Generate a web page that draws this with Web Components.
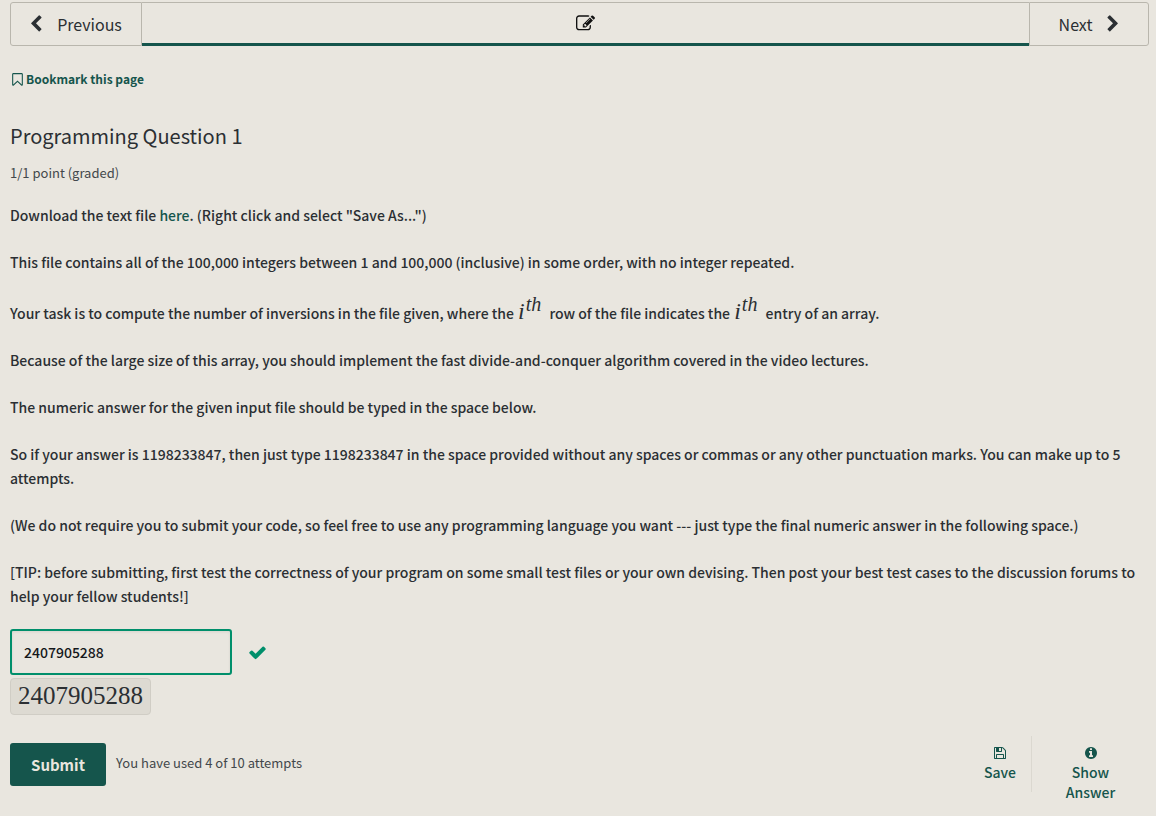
<!DOCTYPE html>
<html lang="en">
<head>
<meta charset="utf-8">
<meta name="viewport" content="width=device-width, initial-scale=1">
<title>Programming Question 1</title>
<style>
  :root {
    --bg: #e9e6df;
    --ink: #2b2f33;
    --muted: #43484b;
    --brand: #15554c;
    --ok: #008f6b;
    --line: #b9b6ad;
    --math: "Liberation Serif", serif;
  }
  body {
    margin: 0;
    background: var(--bg);
    color: var(--ink);
    font: 500 14px/24px "Noto Sans CJK SC", "Noto Sans", sans-serif;
  }
</style>
</head>
<body>
<course-unit></course-unit>

<script>
const ICONS = {
  left: 'M1427 301l-531 531 531 531q19 19 19 45t-19 45l-166 166q-19 19-45 19t-45-19l-742-742q-19-19-19-45t19-45l742-742q19-19 45-19t45 19l166 166q19 19 19 45t-19 45z',
  right: 'M1363 877l-742 742q-19 19-45 19t-45-19l-166-166q-19-19-19-45t19-45l531-531-531-531q-19-19-19-45t19-45l166-166q19-19 45-19t45 19l742 742q19 19 19 45t-19 45z',
  check: 'M1671 566q0 40-28 68l-724 724-136 136q-28 28-68 28t-68-28l-136-136-362-362q-28-28-28-68t28-68l136-136q28-28 68-28t68 28l294 295 656-657q28-28 68-28t68 28l136 136q28 28 28 68z',
  edit: 'M888 1184l116-116-152-152-116 116v56h96v96h56zm440-720q-16-16-33 1l-350 350q-17 17-1 33t33-1l350-350q17-17 1-33zm80 594v190q0 119-84.5 203.5t-203.5 84.5h-832q-119 0-203.5-84.5t-84.5-203.5v-832q0-119 84.5-203.5t203.5-84.5h832q63 0 117 25 15 7 18 23 3 17-9 29l-49 49q-14 14-32 8-23-6-45-6h-832q-66 0-113 47t-47 113v832q0 66 47 113t113 47h832q66 0 113-47t47-113v-126q0-13 9-22l64-64q15-15 35-7t20 29zm-96-738l288 288-672 672h-288v-288zm444 132l-92 92-288-288 92-92q28-28 68-28t68 28l152 152q28 28 28 68t-28 68z',
  save: 'M512 1536h768v-384h-768v384zm896 0h128v-896q0-14-10-38.5t-20-34.5l-281-281q-10-10-34-20t-39-10v416q0 40-28 68t-68 28h-576q-40 0-68-28t-28-68v-416h-128v1280h128v-416q0-40 28-68t68-28h832q40 0 68 28t28 68v416zm-384-928v-320q0-13-9.5-22.5t-22.5-9.5h-192q-13 0-22.5 9.5t-9.5 22.5v320q0 13 9.5 22.5t22.5 9.5h192q13 0 22.5-9.5t9.5-22.5zm640 32v928q0 40-28 68t-68 28h-1344q-40 0-68-28t-28-68v-1344q0-40 28-68t68-28h928q40 0 88 20t76 48l280 280q28 28 48 76t20 88z',
  info: 'M1152 1376v-160q0-14-9-23t-23-9h-96v-512q0-14-9-23t-23-9h-320q-14 0-23 9t-9 23v160q0 14 9 23t23 9h96v320h-96q-14 0-23 9t-9 23v160q0 14 9 23t23 9h448q14 0 23-9t9-23zm-128-896v-160q0-14-9-23t-23-9h-192q-14 0-23 9t-9 23v160q0 14 9 23t23 9h192q14 0 23-9t9-23zm640 416q0 209-103 385.5t-279.5 279.5-385.5 103-385.5-103-279.5-279.5-103-385.5 103-385.5 279.5-279.5 385.5-103 385.5 103 279.5 279.5 103 385.5z',
  bookmark: 'M1408 256h-1024v1242l423-406 89-85 89 85 423 406v-1242zm12-128q23 0 44 9 33 13 52.5 41t19.5 62v1289q0 34-19.5 62t-52.5 41q-19 8-44 8-48 0-83-32l-441-424-441 424q-36 33-83 33-23 0-44-9-33-13-52.5-41t-19.5-62v-1289q0-34 19.5-62t52.5-41q21-9 44-9h1048z'
};

class ShadowElement extends HTMLElement {
  constructor() {
    super();
    this.attachShadow({ mode: 'open' }).innerHTML = this.constructor.markup;
  }
}

class UiIcon extends ShadowElement {
  static markup = `
    <style>
      :host { display: block; flex: none; width: 14px; height: 14px; }
      svg { display: block; width: 100%; height: 100%; fill: currentColor; }
    </style>
    <svg viewBox="0 0 1792 1792" aria-hidden="true"><path/></svg>`;
  connectedCallback() {
    this.shadowRoot.querySelector('path').setAttribute('d', ICONS[this.getAttribute('name')]);
  }
}

class SequenceNav extends ShadowElement {
  static markup = `
    <style>
      :host { display: block; }
      nav { display: flex; height: 44px; }
      button {
        box-sizing: border-box; margin: 0; background: none; cursor: pointer;
        display: flex; align-items: center; justify-content: center;
        border: 1px solid var(--line); color: inherit; padding: 0;
        font: inherit; font-weight: 400; font-size: 16px;
      }
      ui-icon { width: 18px; height: 18px; }
      .prev { width: 132px; border-radius: 3px 0 0 3px; gap: 12px; padding-right: 3px; }
      .next { width: 120px; border-radius: 0 3px 3px 0; gap: 12px; padding-left: 3px; }
      .tab { flex: 1; border-width: 1px 0 3px; border-bottom-color: var(--brand); color: #111; }
      .tab ui-icon { width: 19px; height: 19px; }
    </style>
    <nav aria-label="Unit">
      <button class="prev"><ui-icon name="left"></ui-icon>Previous</button>
      <button class="tab" aria-label="Problem"><ui-icon name="edit"></ui-icon></button>
      <button class="next">Next<ui-icon name="right"></ui-icon></button>
    </nav>`;
}

class BookmarkButton extends ShadowElement {
  static markup = `
    <style>
      :host { display: flex; }
      button {
        display: flex; align-items: center; gap: 1px; cursor: pointer;
        padding: 0; border: 0; background: none; color: var(--brand);
        font: inherit; font-weight: 700; font-size: 12px; line-height: 20px;
      }
      ui-icon { width: 15px; height: 15px; }
    </style>
    <button><ui-icon name="bookmark"></ui-icon><slot></slot></button>`;
}

class MathPower extends ShadowElement {
  static markup = `
    <style>
      :host { display: inline-block; margin: 0 5px 0 1px; font: italic 24px/28px var(--math); }
      sup { margin-left: 1px; font-size: 20px; line-height: 0; vertical-align: 8px; }
    </style>
    <slot></slot><sup><slot name="power"></slot></sup>`;
}

class ProblemText extends ShadowElement {
  static markup = `
    <style>
      :host { display: flex; flex-direction: column; gap: 23px; }
      ::slotted(p) { margin: 0; }
    </style>
    <slot></slot>`;
}

class AnswerField extends ShadowElement {
  static markup = `
    <style>
      :host { display: block; }
      .row { display: flex; align-items: center; gap: 16px; }
      input {
        box-sizing: border-box; width: 222px; height: 46px; margin: 0; padding: 0 12px;
        border: 2px solid var(--ok); border-radius: 3px; background: none;
        box-shadow: inset 0 1px 3px rgba(0,0,0,.08);
        color: #15181b; font: inherit; outline: none;
      }
      ui-icon { width: 19px; height: 19px; color: var(--ok); }
      output {
        box-sizing: border-box; display: block; width: max-content; height: 37px; margin-top: 3px;
        padding: 0 7px; border: 1px solid #d0cdc5; border-radius: 4px; background: #dddad2;
        font: 25px/34px var(--math);
      }
    </style>
    <div class="row">
      <input id="answer" type="text" aria-label="Numeric answer" value="2407905288">
      <ui-icon name="check"></ui-icon>
    </div>
    <output for="answer">2407905288</output>`;
}

class ProblemActions extends ShadowElement {
  static markup = `
    <style>
      :host { display: flex; align-items: flex-start; }
      button { margin: 0; border: 0; cursor: pointer; font: inherit; }
      .submit {
        width: 96px; height: 43px; margin-top: 7px; padding: 0; border-radius: 3px;
        background: var(--brand); color: var(--bg); font-weight: 700; font-size: 15px;
      }
      .used { flex: 1; margin: 17px 0 0 10px; color: var(--muted); font-weight: 400; font-size: 13px; line-height: 20px; }
      .tool {
        display: flex; flex-direction: column; align-items: center; gap: 2px;
        padding: 10px 15px 0; background: none; color: var(--brand); line-height: 20px;
      }
      .tool + .tool { width: 117px; padding: 10px 24px 0; }
      .save { box-sizing: border-box; height: 56px; border-right: 1px solid #dbd8d0; }
    </style>
    <button class="submit">Submit</button>
    <p class="used">You have used 4 of 10 attempts</p>
    <button class="tool save"><ui-icon name="save"></ui-icon>Save</button>
    <button class="tool"><ui-icon name="info"></ui-icon>Show Answer</button>`;
}

class CourseUnit extends ShadowElement {
  static markup = `
    <style>
      :host { display: block; padding: 2px 7px 14px 10px; }
      bookmark-button { margin-top: 23px; }
      h1 { margin: 31px 0 0; font-weight: 400; font-size: 20px; line-height: 32px; }
      .points { margin: 11px 0 20px; color: var(--muted); font-weight: 400; font-size: 13px; line-height: 20px; }
      a { color: var(--brand); text-decoration: none; }
      answer-field { margin-top: 21px; }
      problem-actions { margin-top: 21px; }
    </style>
    <sequence-nav></sequence-nav>
    <bookmark-button>Bookmark this page</bookmark-button>
    <main>
      <h1>Programming Question 1</h1>
      <p class="points">1/1 point (graded)</p>
      <problem-text>
        <p>Download the text file <a href="#">here</a>. (Right click and select "Save As...")</p>
        <p>This file contains all of the 100,000 integers between 1 and 100,000 (inclusive) in some order, with no integer repeated.</p>
        <p>Your task is to compute the number of inversions in the file given, where the <math-power>i<span slot="power">th</span></math-power> row of the file indicates the <math-power>i<span slot="power">th</span></math-power> entry of an array.</p>
        <p>Because of the large size of this array, you should implement the fast divide-and-conquer algorithm covered in the video lectures.</p>
        <p>The numeric answer for the given input file should be typed in the space below.</p>
        <p>So if your answer is 1198233847, then just type 1198233847 in the space provided without any spaces or commas or any other punctuation marks. You can make up to 5 attempts.</p>
        <p>(We do not require you to submit your code, so feel free to use any programming language you want --- just type the final numeric answer in the following space.)</p>
        <p>[TIP: before submitting, first test the correctness of your program on some small test files or your own devising. Then post your best test cases to the discussion forums to help your fellow students!]</p>
      </problem-text>
      <answer-field></answer-field>
      <problem-actions></problem-actions>
    </main>`;
}

customElements.define('ui-icon', UiIcon);
customElements.define('sequence-nav', SequenceNav);
customElements.define('bookmark-button', BookmarkButton);
customElements.define('math-power', MathPower);
customElements.define('problem-text', ProblemText);
customElements.define('answer-field', AnswerField);
customElements.define('problem-actions', ProblemActions);
customElements.define('course-unit', CourseUnit);
</script>
</body>
</html>
